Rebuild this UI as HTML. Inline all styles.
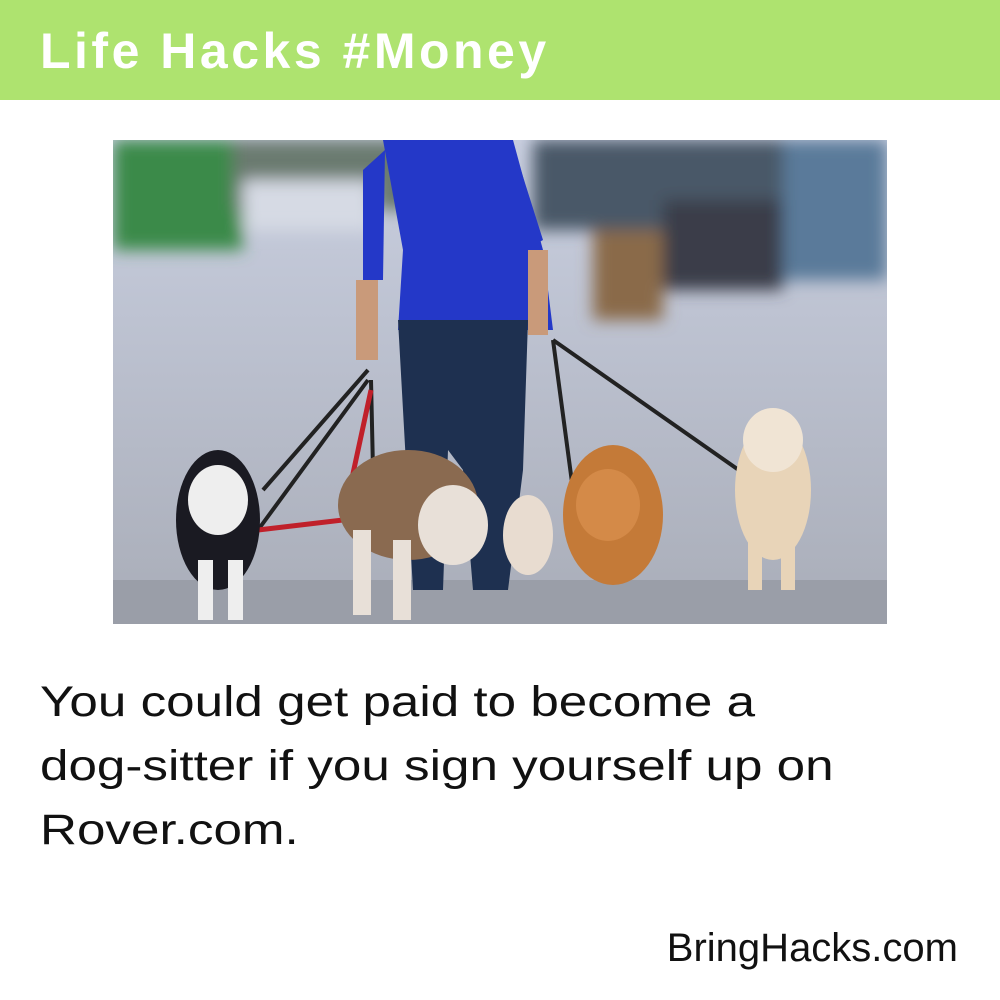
<!DOCTYPE html>
<html><head><meta charset="utf-8"><style>
body{margin:0;width:1000px;height:1000px;background:#fff;font-family:"Liberation Sans",sans-serif;position:relative;overflow:hidden}
.h{position:absolute;left:0;top:0;width:1000px;height:100px;background:#aee36f}
.h span{position:absolute;left:40px;top:22px;font-size:50px;color:#fff;font-weight:bold;letter-spacing:3.5px}
.p{position:absolute;left:113px;top:140px;width:774px;height:484px}
.t{position:absolute;left:40px;top:670px;font-size:43px;line-height:64px;color:#111;transform:scaleX(1.19);transform-origin:0 0;white-space:nowrap}
.f{position:absolute;right:42px;top:926px;font-size:40px;color:#111}
</style></head><body>
<div class="h"><span>Life Hacks #Money</span></div>
<svg class="p" viewBox="0 0 774 484">
<defs>
<linearGradient id="r" x1="0" y1="0" x2="0" y2="1"><stop offset="0" stop-color="#c9cfe0"/><stop offset="1" stop-color="#a9adb8"/></linearGradient>
<filter id="b"><feGaussianBlur stdDeviation="8"/></filter>
</defs>
<rect width="774" height="484" fill="url(#r)"/>
<g filter="url(#b)">
<rect x="0" y="0" width="130" height="110" fill="#3a8a4a"/>
<rect x="120" y="0" width="180" height="70" fill="#6a7a70"/>
<rect x="130" y="40" width="130" height="50" fill="#d6dae4"/>
<rect x="420" y="0" width="354" height="90" fill="#4a5868"/>
<rect x="480" y="90" width="70" height="90" fill="#8a6a48"/>
<rect x="550" y="60" width="120" height="90" fill="#3a3e48"/>
<rect x="670" y="0" width="104" height="140" fill="#5a7a9a"/>
</g>
<rect x="0" y="440" width="774" height="44" fill="#9a9ea8"/>
<path d="M270 0 L400 0 L430 110 L440 190 L285 190 L290 110 Z" fill="#2438c8"/>
<path d="M250 30 L272 10 L270 140 L250 140 Z" fill="#2438c8"/>
<path d="M400 5 L430 100 L412 110 L395 60 Z" fill="#2438c8"/>
<rect x="243" y="140" width="22" height="80" fill="#c99a7a"/>
<rect x="415" y="110" width="20" height="85" fill="#c99a7a"/>
<path d="M285 180 L415 180 L410 330 L395 450 L360 450 L350 330 L335 310 L330 450 L300 450 Z" fill="#1e3050"/>
<path d="M255 230 L150 350 M258 240 L260 330 M440 200 L460 350 M440 200 L640 340 M255 240 L145 390" stroke="#222" stroke-width="4" fill="none"/>
<path d="M258 250 L230 380 L145 390" stroke="#c0202a" stroke-width="5" fill="none"/>
<ellipse cx="105" cy="380" rx="42" ry="70" fill="#1a1a22"/>
<ellipse cx="105" cy="360" rx="30" ry="35" fill="#eee"/>
<rect x="85" y="420" width="15" height="60" fill="#eee"/>
<rect x="115" y="420" width="15" height="60" fill="#eee"/>
<ellipse cx="295" cy="365" rx="70" ry="55" fill="#8a6a50"/>
<ellipse cx="340" cy="385" rx="35" ry="40" fill="#e8e0d8"/>
<rect x="240" y="390" width="18" height="85" fill="#e8e0d8"/>
<rect x="280" y="400" width="18" height="80" fill="#e8e0d8"/>
<ellipse cx="415" cy="395" rx="25" ry="40" fill="#e8dcd0"/>
<ellipse cx="500" cy="375" rx="50" ry="70" fill="#c47a38"/>
<ellipse cx="495" cy="365" rx="32" ry="36" fill="#d48a48"/>
<ellipse cx="660" cy="350" rx="38" ry="70" fill="#e8d4b8"/>
<ellipse cx="660" cy="300" rx="30" ry="32" fill="#f0e4d4"/>
<rect x="635" y="390" width="14" height="60" fill="#e8d4b8"/>
<rect x="668" y="390" width="14" height="60" fill="#e8d4b8"/>
</svg>
<div class="t">You could get paid to become a<br>dog-sitter if you sign yourself up on<br>Rover.com.</div>
<div class="f">BringHacks.com</div>
</body></html>
